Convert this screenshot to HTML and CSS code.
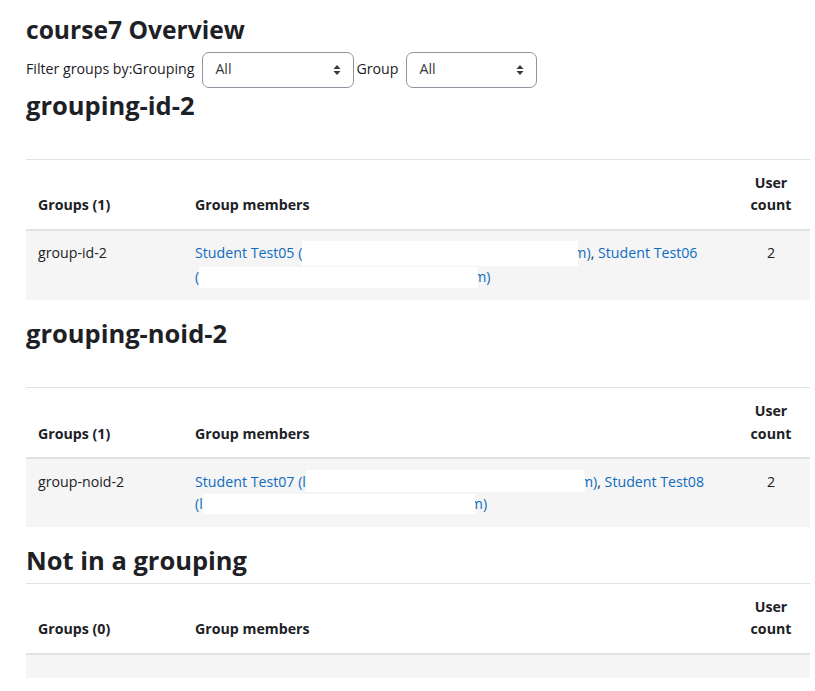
FILE: index.html
```html
<!DOCTYPE html>
<html lang="en">
<head>
<meta charset="utf-8">
<title>course7 Overview</title>
<link rel="stylesheet" href="styles.css">
</head>
<body>
<div class="page">
  <h2 class="title">course7 Overview</h2>
  <div class="filters">
    <span class="lbl">Filter groups by:Grouping</span>
    <div class="select sel-grouping"><span>All</span>
      <svg class="caret" width="8" height="12" viewBox="0 0 8 12"><path d="M0.5 5 L4 1 L7.5 5Z M0.5 7 L4 11 L7.5 7Z" fill="#343a40"/></svg>
    </div>
    <span class="lbl lbl-group">Group</span>
    <div class="select sel-group"><span>All</span>
      <svg class="caret" width="8" height="12" viewBox="0 0 8 12"><path d="M0.5 5 L4 1 L7.5 5Z M0.5 7 L4 11 L7.5 7Z" fill="#343a40"/></svg>
    </div>
  </div>

  <h3 class="section">grouping-id-2</h3>
  <div class="desc"></div>
  <table class="generaltable">
    <thead>
      <tr><th class="c-group">Groups (1)</th><th class="c-members">Group members</th><th class="c-count">User count</th></tr>
    </thead>
    <tbody>
      <tr>
        <td class="c-group">group-id-2</td>
        <td class="c-members"><a href="#">Student Test05 <span class="nw">(<span class="redact r1"></span>m)</span></a>, <a href="#">Student Test06 <span class="nw">(<span class="redact r2"></span>m)</span></a></td>
        <td class="c-count">2</td>
      </tr>
    </tbody>
  </table>

  <h3 class="section">grouping-noid-2</h3>
  <div class="desc"></div>
  <table class="generaltable">
    <thead>
      <tr><th class="c-group">Groups (1)</th><th class="c-members">Group members</th><th class="c-count">User count</th></tr>
    </thead>
    <tbody>
      <tr>
        <td class="c-group">group-noid-2</td>
        <td class="c-members"><a href="#">Student Test07 <span class="nw">(l<span class="redact r3"></span>m)</span></a>, <a href="#">Student Test08 <span class="nw">(l<span class="redact r4"></span>m)</span></a></td>
        <td class="c-count">2</td>
      </tr>
    </tbody>
  </table>

  <h3 class="section">Not in a grouping</h3>
  <table class="generaltable">
    <thead>
      <tr><th class="c-group">Groups (0)</th><th class="c-members">Group members</th><th class="c-count">User count</th></tr>
    </thead>
    <tbody>
      <tr class="empty"><td class="c-group"></td><td class="c-members"></td><td class="c-count"></td></tr>
    </tbody>
  </table>
</div>
</body>
</html>
```

FILE: styles.css
```css
* { box-sizing: border-box; }
html, body { margin: 0; padding: 0; background: #fff; }
body {
  font-family: "Open Sans", "Noto Sans", "Liberation Sans", sans-serif;
  font-size: 14.2px;
  line-height: 22.5px;
  color: #1d2125;
}
.page {
  padding: 14.5px 5px 0 26px;
}
h2.title, h3.section {
  font-size: 25.5px;
  line-height: 29px;
  font-weight: 700;
  margin: 0;
}
h2.title { font-size: 24.6px; margin-bottom: 8px; }
.filters {
  display: flex;
  align-items: center;
  height: 36px;
  margin-bottom: 3px;
}
.lbl { white-space: nowrap; }
.lbl-group { margin-left: 2px; }
.select {
  height: 36px;
  border: 1px solid #8f959e;
  border-radius: 7px;
  display: flex;
  align-items: center;
  justify-content: space-between;
  padding: 0 12px 0 12px;
  margin-left: 8px;
  color: #343a40;
  background: #fff;
}
.sel-grouping { width: 152px; }
.sel-group { width: 131px; }
.caret { display: block; }
h3.section { margin-bottom: 7.5px; }
.desc { height: 31.5px; }
table.generaltable {
  width: 100%;
  border-collapse: collapse;
  margin-bottom: 19px;
}
.generaltable th, .generaltable td {
  text-align: left;
}
.generaltable th {
  padding: 12px;
  vertical-align: bottom;
  font-weight: 700;
  border-top: 1px solid #dee2e6;
  border-bottom: 2px solid #dee2e6;
}
.generaltable td {
  padding: 11.5px 12px;
  vertical-align: top;
}
.generaltable tbody tr { background: #f5f5f5; }
.generaltable tr.empty td { height: 24px; padding: 0; }
.c-group { width: 157px; }
.c-count { width: 78px; }
.generaltable th.c-count, .generaltable td.c-count { text-align: center; }
a { color: #0f6cbf; text-decoration: none; }
.nw { white-space: nowrap; }
.redact {
  display: inline-block;
  background: #fff;
  vertical-align: top;
  position: relative;
  z-index: 1;
  margin-right: -5px;
}
.r1 { width: 276px; margin-top: -1px; height: 25px; }
.r2 { width: 279px; margin-top: 1px; height: 21px; }
.r3 { width: 279px; height: 22px; margin-top: -1px; }
.r4 { width: 272px; height: 20px; margin-top: 1px; }
```
